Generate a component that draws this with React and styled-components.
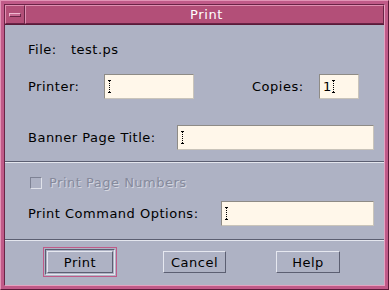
import React from 'react';
import styled, { createGlobalStyle } from 'styled-components';

const GlobalStyle = createGlobalStyle`
  html, body {
    margin: 0;
    padding: 0;
    background: #aeb2c4;
  }
  body {
    font-family: "DejaVu Sans", "Liberation Sans", sans-serif;
  }
`;

const Frame = styled.div`
  width: 389px;
  height: 290px;
  box-sizing: border-box;
  background: #c05a88;
  border: 1px solid;
  border-color: #e294b6 #5a1a38 #5a1a38 #e294b6;
  padding: 3px;
  display: flex;
  flex-direction: column;
`;

const Inner = styled.div`
  flex: 1;
  display: flex;
  flex-direction: column;
  border: 1px solid;
  border-color: #6a2446 #e6a2c0 #e6a2c0 #6a2446;
`;

const TitleBar = styled.div`
  height: 19px;
  display: flex;
  border-bottom: 1px solid #5a1a38;
`;

const MenuButton = styled.div`
  width: 18px;
  border: 1px solid;
  border-color: #e090b2 #6a2446 #6a2446 #e090b2;
  background: #b34f78;
  display: flex;
  align-items: center;
  justify-content: center;
`;

const MenuBar = styled.div`
  width: 10px;
  height: 2px;
  border: 1px solid;
  border-color: #f0b8d0 #6a2446 #6a2446 #f0b8d0;
  background: #c66890;
`;

const Title = styled.div`
  flex: 1;
  background: #b34f78;
  border: 1px solid;
  border-color: #e090b2 #6a2446 #6a2446 #e090b2;
  color: #ffffff;
  font-size: 13px;
  letter-spacing: 0.6px;
  display: flex;
  align-items: center;
  justify-content: center;
  padding-left: 4px;
`;

const Content = styled.div`
  flex: 1;
  background: #aeb2c4;
  display: flex;
  flex-direction: column;
  color: #000;
  font-size: 13px;
  letter-spacing: 0.5px;
`;

const Section = styled.div`
  padding: ${({ $pad }) => $pad};
  display: flex;
  flex-direction: column;
  gap: ${({ $gap }) => $gap};
`;

const Separator = styled.div`
  height: 0;
  border-top: 1px solid #5c5f72;
  border-bottom: 1px solid #e4e6ee;
`;

const Row = styled.div`
  display: flex;
  align-items: center;
  height: ${({ $h }) => $h || '25px'};
  padding-left: 23px;
`;

const Label = styled.span`
  width: ${({ $w }) => $w || 'auto'};
  white-space: nowrap;
`;

const Field = styled.div`
  box-sizing: border-box;
  width: ${({ $w }) => $w};
  height: 25px;
  background: #fff7ea;
  border: 1px solid;
  border-color: #8e8b86 #c9c4ba #c9c4ba #8e8b86;
  display: flex;
  align-items: center;
  padding-left: 3px;
  font-size: 13px;
`;

const Caret = styled.span`
  display: inline-block;
  width: 3px;
  height: 13px;
  border-top: 1px solid #000;
  border-bottom: 1px solid #000;
  box-sizing: border-box;
  position: relative;
  &::after {
    content: '';
    position: absolute;
    left: 1px;
    top: 0;
    bottom: 0;
    border-left: 1px dotted #000;
  }
`;

const Check = styled.span`
  box-sizing: border-box;
  width: 12px;
  height: 12px;
  border: 1px solid;
  border-color: #7e8294 #e0e2ea #e0e2ea #7e8294;
  margin-left: 2px;
  margin-right: 7px;
`;

const Disabled = styled.span`
  color: #868a9c;
  text-shadow: 1px 1px 0 #d4d6e0;
`;

const ButtonRow = styled.div`
  flex: 1;
  display: flex;
  align-items: center;
  padding: 0 0 2px 38px;
`;

const DefaultRing = styled.div`
  border: 1px solid #c05a88;
  padding: 1px;
  margin-right: 46px;
`;

const Sunken = styled.div`
  border: 1px solid;
  border-color: #5c5f72 #e4e6ee #e4e6ee #5c5f72;
  padding: 1px;
`;

const Button = styled.button`
  box-sizing: border-box;
  width: ${({ $w }) => $w};
  height: 22px;
  margin-left: ${({ $ml }) => $ml || '0'};
  background: #aeb2c4;
  border: 1px solid;
  border-color: #e6e8f0 #5c5f72 #5c5f72 #e6e8f0;
  font-family: "DejaVu Sans", "Liberation Sans", sans-serif;
  font-size: 13px;
  letter-spacing: 0.5px;
  color: #000;
  padding: 0;
`;

export default function App() {
  return (
    <>
      <GlobalStyle />
      <Frame>
        <Inner>
          <TitleBar>
            <MenuButton>
              <MenuBar />
            </MenuButton>
            <Title>Print</Title>
          </TitleBar>
          <Content>
            <Section $pad="14px 0 11px" $gap="0px">
              <Row $h="20px">
                <Label $w="43px">File:</Label>
                <span>test.ps</span>
              </Row>
              <Row style={{ marginTop: 15 }}>
                <Label $w="76px">Printer:</Label>
                <Field $w="90px"><Caret /></Field>
                <Label style={{ marginLeft: 58 }} $w="67px">Copies:</Label>
                <Field $w="40px">1<Caret /></Field>
              </Row>
              <Row style={{ marginTop: 26 }}>
                <Label $w="149px">Banner Page Title:</Label>
                <Field $w="197px"><Caret /></Field>
              </Row>
            </Section>
            <Separator />
            <Section $pad="13px 0 13px" $gap="12px">
              <Row $h="13px">
                <Check />
                <Disabled>Print Page Numbers</Disabled>
              </Row>
              <Row>
                <Label $w="193px">Print Command Options:</Label>
                <Field $w="153px"><Caret /></Field>
              </Row>
            </Section>
            <Separator />
            <ButtonRow>
              <DefaultRing>
                <Sunken>
                  <Button $w="66px">Print</Button>
                </Sunken>
              </DefaultRing>
              <Button $w="63px">Cancel</Button>
              <Button $w="64px" $ml="50px">Help</Button>
            </ButtonRow>
          </Content>
        </Inner>
      </Frame>
    </>
  );
}
